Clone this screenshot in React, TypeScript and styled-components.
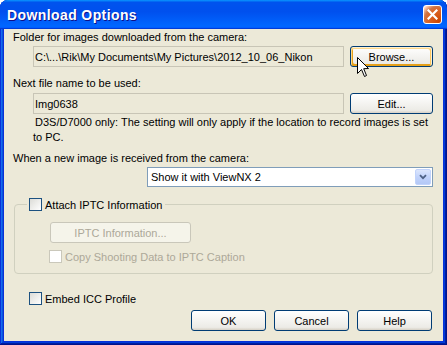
import styled, { createGlobalStyle } from "styled-components";

const GlobalStyle = createGlobalStyle`
  html, body {
    margin: 0;
    padding: 0;
    background: #fff;
  }
  body {
    font-family: "Liberation Sans", Arial, sans-serif;
    font-size: 11px;
    color: #000;
  }
`;

const Window = styled.div`
  position: relative;
  width: 447px;
  height: 345px;
  box-sizing: border-box;
  display: flex;
  flex-direction: column;
  padding: 0 4px 4px 4px;
  background: #0831d9;
  border-radius: 8px 8px 0 0;
  box-shadow: inset -1px -1px #00138c, inset 1px 1px #0831d9,
    inset -2px -2px #001ea0, inset 2px 2px #166aee, inset -3px -3px #003bda,
    inset 3px 3px #0855dd;
`;

const TitleBar = styled.div`
  height: 29px;
  margin: 0 -4px;
  padding: 0 5px 0 7px;
  display: flex;
  align-items: center;
  justify-content: space-between;
  border-radius: 8px 8px 0 0;
  background: linear-gradient(
    180deg,
    #0997ff,
    #0053ee 8%,
    #0050ee 40%,
    #06f 88%,
    #06f 93%,
    #005bff 95%,
    #003dd7 96%,
    #003dd7
  );
`;

const Title = styled.span`
  color: #fff;
  font-family: "Liberation Sans", Arial, sans-serif;
  font-weight: bold;
  font-size: 14px;
  letter-spacing: 0.4px;
  text-shadow: 1px 1px #0f1089;
`;

const CloseButton = styled.div`
  width: 19px;
  height: 19px;
  box-sizing: border-box;
  display: flex;
  align-items: center;
  justify-content: center;
  border: 1px solid #fff;
  border-radius: 3px;
  background: radial-gradient(
    circle at 90% 90%,
    #cc4600 0%,
    #dc6527 55%,
    #cd7546 70%,
    #ffccb2 90%,
    #fff 100%
  );
`;

const Body = styled.div`
  flex: 1;
  position: relative;
  background: #ece9d8;
  padding: 2px 11px 0 9px;
  display: flex;
  flex-direction: column;
  align-items: flex-start;
`;

const Label = styled.div<{ $top?: number }>`
  line-height: 13px;
  margin-top: ${(p) => p.$top ?? 0}px;
  white-space: nowrap;
`;

const FieldRow = styled.div<{ $top: number }>`
  display: flex;
  align-items: center;
  gap: 6px;
  margin: ${(p) => p.$top}px 0 0 20px;
`;

const Field = styled.div`
  width: 311px;
  height: 21px;
  box-sizing: border-box;
  padding-left: 1px;
  display: flex;
  align-items: center;
  border: 1px solid #c8c5b6;
  background: #ece9d8;
  white-space: nowrap;
`;

const Button = styled.button<{ $w: number; $hot?: boolean }>`
  width: ${(p) => p.$w}px;
  height: 21px;
  box-sizing: border-box;
  padding: 0;
  font-family: "Liberation Sans", Arial, sans-serif;
  font-size: 11px;
  color: #000;
  border: 1px solid #003c74;
  border-radius: 3px;
  background: linear-gradient(180deg, #fff, #ecebe6 86%, #d6d0c5);
  box-shadow: ${(p) =>
    p.$hot
      ? "inset -1px 1px #fff0cf, inset 1px 2px #fdd889, inset -2px 2px #fbc761, inset 2px -2px #e5a01a"
      : "none"};

  &:disabled {
    color: #aca899;
    border-color: #c9c7ba;
    background: #f5f4ea;
  }
`;

const Note = styled.div`
  margin: 1px 0 0 20px;
  line-height: 15px;
  text-indent: 2px;
  white-space: nowrap;
`;

const Select = styled.div`
  margin: 2px 0 0 134px;
  width: 286px;
  height: 20px;
  box-sizing: border-box;
  display: flex;
  align-items: center;
  justify-content: space-between;
  padding: 1px 1px 1px 3px;
  border: 1px solid #7f9db9;
  background: #fff;
`;

const SelectArrow = styled.div`
  width: 16px;
  height: 16px;
  box-sizing: border-box;
  display: flex;
  align-items: center;
  justify-content: center;
  border: 1px solid #c1d3fb;
  border-radius: 2px;
  background: linear-gradient(180deg, #dce6fd, #c1d3fb 50%, #b4c8f6);
`;

const Group = styled.fieldset`
  margin: 11px 0 0 1px;
  width: 419px;
  height: 76px;
  box-sizing: border-box;
  padding: 0;
  border: 1px solid #d0d0bf;
  border-radius: 4px;
  display: flex;
  flex-direction: column;
  align-items: flex-start;
`;

const Legend = styled.legend`
  margin-left: 12px;
  padding: 0 3px 0 2px;
`;

const CheckRow = styled.label<{ $top?: number; $left?: number; $off?: boolean }>`
  display: flex;
  align-items: center;
  gap: 3px;
  height: 13px;
  margin: ${(p) => p.$top ?? 0}px 0 0 ${(p) => p.$left ?? 0}px;
  color: ${(p) => (p.$off ? "#aca899" : "#000")};
  white-space: nowrap;
`;

const Box = styled.span<{ $off?: boolean }>`
  width: 13px;
  height: 13px;
  box-sizing: border-box;
  border: 1px solid ${(p) => (p.$off ? "#cac8bb" : "#1c5180")};
  background: ${(p) =>
    p.$off ? "#fff" : "linear-gradient(135deg, #dcdcd7, #fff)"};
`;

const GroupButton = styled(Button)`
  margin: 11px 0 0 35px;
`;

const Footer = styled.div`
  align-self: stretch;
  display: flex;
  justify-content: flex-end;
  gap: 8px;
  margin-top: 5px;
`;

const Cursor = styled.svg`
  position: absolute;
  left: 357px;
  top: 57px;
`;

export default function App() {
  return (
    <>
      <GlobalStyle />
      <Window>
        <TitleBar>
          <Title>Download Options</Title>
          <CloseButton>
            <svg width="11" height="11" viewBox="0 0 11 11">
              <path
                d="M1.5 1.5 L9.5 9.5 M9.5 1.5 L1.5 9.5"
                stroke="#fff"
                strokeWidth="2.2"
                strokeLinecap="square"
              />
            </svg>
          </CloseButton>
        </TitleBar>
        <Body>
          <Label>Folder for images downloaded from the camera:</Label>
          <FieldRow $top={2}>
            <Field>C:\...\Rik\My Documents\My Pictures\2012_10_06_Nikon</Field>
            <Button $w={83} $hot>
              Browse...
            </Button>
          </FieldRow>
          <Label $top={10}>Next file name to be used:</Label>
          <FieldRow $top={3}>
            <Field>Img0638</Field>
            <Button $w={83}>Edit...</Button>
          </FieldRow>
          <Note>
            D3S/D7000 only: The setting will only apply if the location to record images is set
            <br />
            to PC.
          </Note>
          <Label $top={7}>When a new image is received from the camera:</Label>
          <Select>
            <span>Show it with ViewNX 2</span>
            <SelectArrow>
              <svg width="8" height="6" viewBox="0 0 8 6">
                <path
                  d="M1 1.2 L4 4.2 L7 1.2"
                  fill="none"
                  stroke="#4d6185"
                  strokeWidth="1.8"
                />
              </svg>
            </SelectArrow>
          </Select>
          <Group>
            <Legend>
              <CheckRow>
                <Box />
                Attach IPTC Information
              </CheckRow>
            </Legend>
            <GroupButton $w={141} disabled>
              IPTC Information...
            </GroupButton>
            <CheckRow $top={7} $left={34} $off>
              <Box $off />
              Copy Shooting Data to IPTC Caption
            </CheckRow>
          </Group>
          <CheckRow $top={18} $left={16}>
            <Box />
            Embed ICC Profile
          </CheckRow>
          <Footer>
            <Button $w={75}>OK</Button>
            <Button $w={75}>Cancel</Button>
            <Button $w={75}>Help</Button>
          </Footer>
        </Body>
        <Cursor width="13" height="21" viewBox="0 0 13 21">
          <path
            d="M0.5 0.5 L0.5 16.5 L4.5 12.5 L7.5 19.5 L9.5 18.5 L6.7 11.7 L11.5 11.5 Z"
            fill="#fff"
            stroke="#000"
            strokeWidth="1"
          />
        </Cursor>
      </Window>
    </>
  );
}
